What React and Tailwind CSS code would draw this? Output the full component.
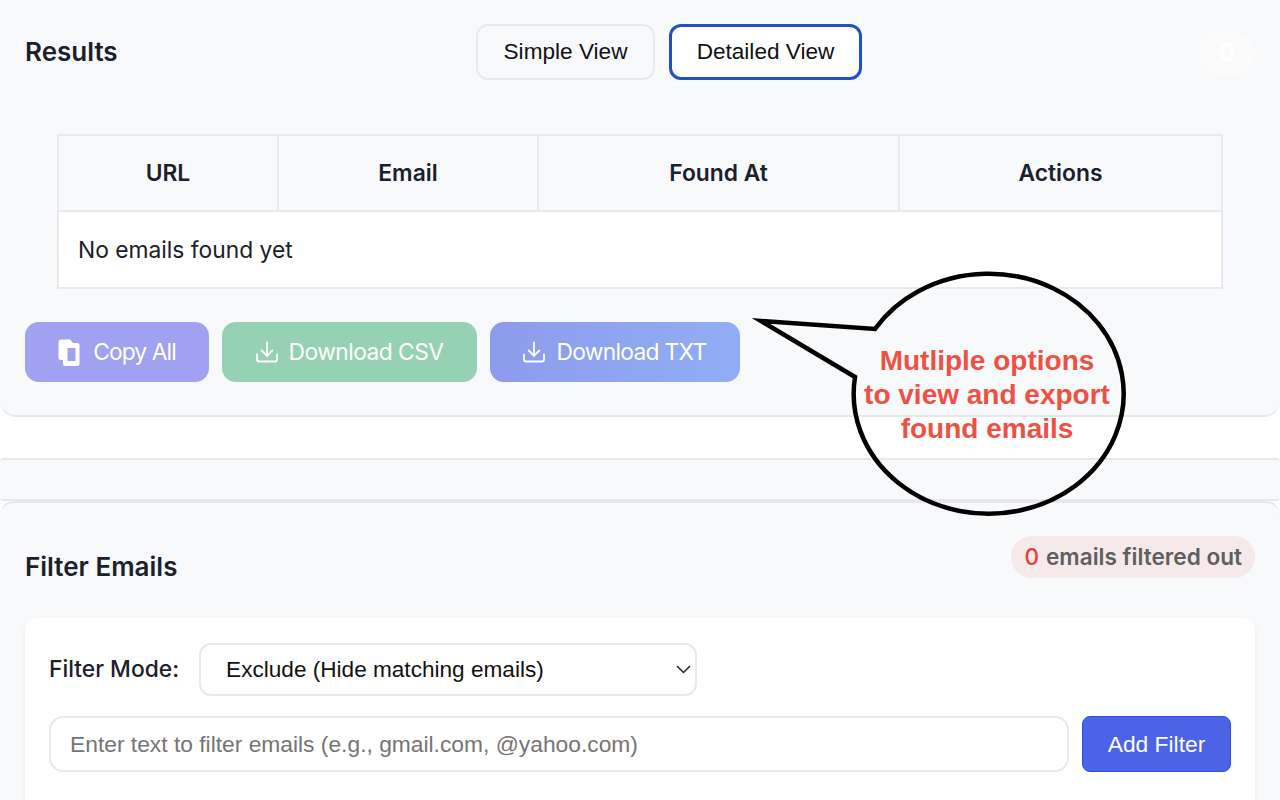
function DownloadIcon() {
  return (
    <svg width="22" height="22" viewBox="0 0 22 22" fill="none" stroke="currentColor" strokeWidth="1.800" strokeLinecap="round" strokeLinejoin="round" className="shrink-0">
      <path d="M1 13.500v5a2 2 0 0 0 2 2h16a2 2 0 0 0 2-2v-5" />
      <path d="M11 1.500v13" />
      <path d="M5.700 9.500l5.300 5.300 5.300-5.300" />
    </svg>
  );
}

function CopyIcon() {
  return (
    <svg width="22" height="27" viewBox="0 0 22 27" fill="white" className="shrink-0">
      <path d="M3 .5h9l3 3.500H7a2 2 0 0 0-2 2v15H2.500a2 2 0 0 1-2-2V3a2.500 2.500 0 0 1 2.500-2.500z" />
      <path fillRule="evenodd" d="M7 4h12.500a2 2 0 0 1 2 2v19a2 2 0 0 1-2 2H7a2 2 0 0 1-2-2V6a2 2 0 0 1 2-2zm2.500 5v13h8V9z" />
    </svg>
  );
}

export default function App() {
  return (
    <div className="relative h-[800px] w-[1280px] overflow-hidden bg-white font-['Inter',sans-serif] text-[#1a202c]">
      <section className="h-[417px] rounded-b-[16px] border-b-2 border-[#e5e7eb] bg-[#f8f9fb] px-[25px]">
        <div className="relative flex h-[104px] items-center justify-between">
          <h2 className="-translate-y-[1px] text-[26px] font-semibold text-[#1a202c]">Results</h2>
          <div className="absolute left-[451px] top-[24px] flex gap-[14px] font-['Liberation_Sans',sans-serif] text-[22.600px] text-[#111]">
            <button className="h-[56px] w-[179px] rounded-[12px] border-2 border-[#e8e9ec] bg-[#f8f9fb]">Simple View</button>
            <button className="h-[56px] w-[193px] rounded-[12px] border-[3px] border-[#2150c4] bg-white">Detailed View</button>
          </div>
          <span className="translate-y-[1px] rounded-full bg-[#fbfbfc] px-[20px] py-[3px] text-[24px] font-semibold text-white">0</span>
        </div>
        <div className="mx-[32px] mt-[30px] h-[155px] w-[1166px] border-2 border-[#e8eaed] bg-white">
          <div className="grid h-[74px] grid-cols-[220px_260px_361px_1fr] bg-[#f8f9fb] text-[22.800px] font-semibold text-[#1a202c]">
            <div className="flex items-center justify-center border-r-2 border-[#e8eaed]">URL</div>
            <div className="flex items-center justify-center border-r-2 border-[#e8eaed]">Email</div>
            <div className="flex items-center justify-center border-r-2 border-[#e8eaed]">Found At</div>
            <div className="flex items-center justify-center">Actions</div>
          </div>
          <div className="flex h-[77px] items-center border-t-2 border-[#e8eaed] px-[19px] pt-[2px] text-[22.800px] text-[#1a202c]">No emails found yet</div>
        </div>
        <div className="mt-[33px] flex gap-[13px] text-[22.800px] text-white">
          <button className="flex h-[60px] w-[184px] items-center justify-center gap-[13px] rounded-[14px] bg-[#a0a1f0] tracking-[-0.9px]"><CopyIcon />Copy All</button>
          <button className="flex h-[60px] w-[255px] items-center justify-center gap-[11px] rounded-[14px] bg-[#97d1b3] tracking-[-0.55px]"><DownloadIcon />Download CSV</button>
          <button className="flex h-[60px] w-[250px] items-center justify-center gap-[11px] rounded-[14px] bg-gradient-to-r from-[#8d9bec] to-[#90aef5] tracking-[-0.7px]"><DownloadIcon />Download TXT</button>
        </div>
      </section>
      <div className="h-[41px]" />
      <div className="h-[43px] rounded-[4px] border-y-2 border-[#e5e7eb] bg-[#f8f9fb]" />
      <section className="h-[300px] rounded-t-[14px] border-t-2 border-[#e5e7eb] bg-[#f8f9fb] px-[25px]">
        <div className="flex items-start justify-between pt-[33px]">
          <h2 className="mt-[16px] text-[26px] font-semibold leading-[30px] text-[#1a202c]">Filter Emails</h2>
          <div className="flex h-[42px] items-center rounded-full bg-[#f5e9e9] px-[13px] text-[22.600px] font-semibold text-[#5f5f5f]">
            <span className="mr-[7px] font-medium text-[#e53e3e]">0</span>emails filtered out
          </div>
        </div>
        <div className="mt-[36px] rounded-t-[12px] bg-white px-[24px] pt-[25px] pb-[40px] shadow-[0_2px_6px_rgba(0,0,0,0.05)]">
          <div className="flex items-center gap-[20px]">
            <span className="text-[22.800px] font-medium text-[#1a202c]">Filter Mode:</span>
            <div className="relative flex h-[53px] w-[498px] items-center rounded-[12px] border-2 border-[#e8e9ec] bg-white pl-[25px] font-['Liberation_Sans',sans-serif] text-[22.600px] text-[#111]">
              Exclude (Hide matching emails)
              <svg width="15" height="9" viewBox="0 0 15 9" fill="none" stroke="#222" strokeWidth="1.500" className="absolute right-[4px] top-[20px]"><path d="M1 1l6.500 6.500 6.500-6.500" /></svg>
            </div>
          </div>
          <div className="mt-[20px] flex gap-[13px]">
            <input
              className="h-[56px] flex-1 rounded-[14px] border-2 border-[#e8e9ec] bg-white px-[19px] font-['Liberation_Sans',sans-serif] text-[22.800px] outline-none placeholder:text-[#757575]"
              placeholder="Enter text to filter emails (e.g., gmail.com, @yahoo.com)"
            />
            <button className="h-[56px] w-[149px] rounded-[8px] border border-[#2f4fe0] bg-[#4a63e7] font-['Liberation_Sans',sans-serif] text-[22.800px] text-white">Add Filter</button>
          </div>
        </div>
      </section>
      <svg className="pointer-events-none absolute left-0 top-0" width="1280" height="800" viewBox="0 0 1280 800" fill="none">
        <path d="M875 329 A135 120 0 1 1 855 377 L761 321 Z" stroke="#000" strokeWidth="4.500" strokeLinejoin="miter" strokeMiterlimit="12" />
      </svg>
      <div className="absolute left-[837px] top-[344px] w-[300px] text-center font-['Liberation_Sans',sans-serif] text-[28px] font-bold leading-[34px] text-[#ef5044]">
        Mutliple options<br />to view and export<br />found emails
      </div>
    </div>
  );
}
